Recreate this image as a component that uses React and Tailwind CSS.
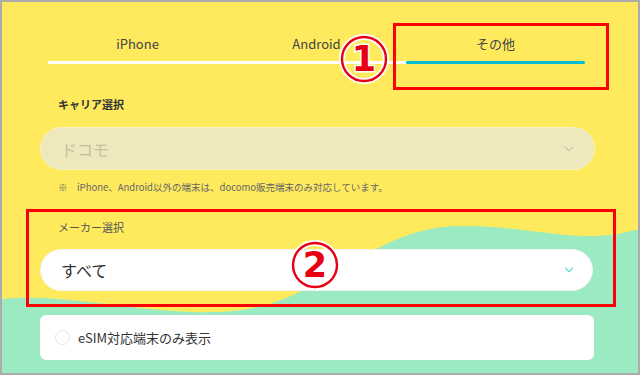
import { ChevronDown } from "lucide-react";

const jp = { fontFamily: '"Noto Sans CJK JP", "Noto Sans", sans-serif' };

function CircledNumber({ n, className }) {
    return (
        <svg
            width="52"
            height="52"
            viewBox="0 0 52 52"
            className={className}
        >
            <circle cx="26" cy="26" r="22" fill="none" stroke="#fff" strokeWidth="6" />
            <circle cx="26" cy="26" r="22" fill="none" stroke="#e60012" strokeWidth="2.4" />
            <text
                x="26"
                y="38"
                textAnchor="middle"
                fontSize="35"
                fontWeight="900"
                fill="#e60012"
                stroke="#fff"
                strokeWidth="3"
                paintOrder="stroke"
                style={{ fontFamily: '"DejaVu Sans", sans-serif' }}
            >
                {n}
            </text>
        </svg>
    );
}

function Tab({ label, active }) {
    return (
        <div className="flex flex-1 flex-col items-center">
            <span className="pt-[32px] pb-[7px] text-[13px] leading-[20px] text-[#444]">
                {label}
            </span>
            <div
                className={
                    active
                        ? "h-[3px] w-full rounded-full bg-[#00bcd4]"
                        : "h-[3px] w-full bg-white"
                }
            />
        </div>
    );
}

export default function App() {
    return (
        <div
            className="relative h-[375px] w-[640px] overflow-hidden border-2 border-[#ababab] bg-[#ffea5e]"
            style={jp}
        >
            {/* wave */}
            <svg
                className="absolute inset-0"
                width="640"
                height="375"
                viewBox="0 0 640 375"
            >
                <path
                    d="M0,297 C70,290 160,318 240,308 C320,298 370,226 455,224 C530,222 575,246 640,226 L640,375 L0,375 Z"
                    fill="#9beac1"
                />
            </svg>

            <div className="relative flex flex-col pl-[38px] pr-[43px]">
                <div className="ml-[8px] mr-[10px] flex">
                    <Tab label="iPhone" />
                    <Tab label="Android" />
                    <Tab label="その他" active />
                </div>

                <p className="mt-[32px] pl-[18px] text-[11px] font-semibold leading-[16px] text-[#333]">
                    キャリア選択
                </p>
                <div className="mt-[15px] flex h-[43px] items-center justify-between rounded-full border border-[#f6f0c8] bg-[#eee8bd] pl-[20px] pr-[18px]">
                    <span className="text-[16px] text-[#c4c0a2]">ドコモ</span>
                    <ChevronDown size={14} strokeWidth={1.5} className="text-[#a9a79a]" />
                </div>
                <p className="mt-[10px] pl-[18px] text-[9.5px] leading-[14px] text-[#666]">
                    ※　iPhone、Android以外の端末は、docomo販売端末のみ対応しています。
                </p>

                <p className="mt-[25px] pl-[18px] text-[11px] leading-[16px] text-[#555]">
                    メーカー選択
                </p>
                <div className="mt-[14px] mr-[2px] flex h-[42px] items-center justify-between rounded-full border border-[#f2f2f2] bg-white pl-[20px] pr-[16px]">
                    <span className="text-[16px] text-[#333]">すべて</span>
                    <ChevronDown size={14} strokeWidth={2} className="text-[#5fdccc]" />
                </div>

                <div className="mt-[24px] mr-[1px] flex h-[45px] items-center gap-[8px] rounded-[6px] bg-white pl-[15px]">
                    <span className="h-[15px] w-[15px] rounded-full border border-[#e3e3e3]" />
                    <span className="text-[13px] text-[#333]">eSIM対応端末のみ表示</span>
                </div>
            </div>

            {/* annotations */}
            <div className="absolute left-[391px] top-[21px] h-[67px] w-[216px] border-[3px] border-[#ff0000]" />
            <div className="absolute left-[24px] top-[207px] h-[98px] w-[590px] border-[3px] border-[#ff0000]" />
            <CircledNumber n="1" className="absolute left-[336px] top-[31px]" />
            <CircledNumber n="2" className="absolute left-[287px] top-[237px]" />
        </div>
    );
}
